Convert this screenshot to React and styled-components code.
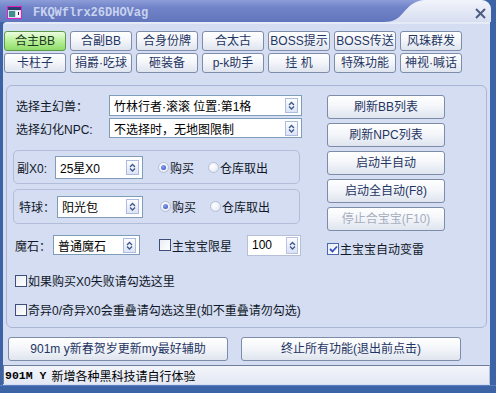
import React from "react";
import styled, { createGlobalStyle, css } from "styled-components";

const GlobalStyle = createGlobalStyle`
  html, body {
    margin: 0;
    padding: 0;
    background: #3b63a6;
  }
  body {
    font-family: "Liberation Sans", "Noto Sans CJK SC", sans-serif;
  }
`;

const CJK = `"Liberation Sans", "Noto Sans CJK SC", sans-serif`;

const Window = styled.div`
  width: 496px;
  height: 393px;
  display: flex;
  flex-direction: column;
  background: #3b63a6;
  overflow: hidden;
  font-family: ${CJK};
  font-size: 12px;
`;

const TitleBar = styled.div`
  position: relative;
  flex: none;
  height: 22px;
  margin-right: 5px;
  border-top-right-radius: 9px;
  background: linear-gradient(#f2f4fb, #d7def1);
  display: flex;
  align-items: center;
  padding: 3px 0 0 7px;
  box-sizing: border-box;

  &::before {
    content: "";
    position: absolute;
    inset: 0;
    background: linear-gradient(#8d9dd8, #7083c8 35%, #6276bd);
    clip-path: path("M0 0 H424 C414 1 409 6 403 13 C398 19 393 22 384 22 H0 Z");
  }
`;

const TitleIcon = styled.svg`
  position: relative;
  flex: none;
`;

const TitleText = styled.span`
  position: relative;
  margin-left: 11px;
  font-family: "Liberation Mono", monospace;
  font-weight: bold;
  font-size: 12px;
  color: #c9d3ef;
`;

const CloseIcon = styled.svg`
  position: relative;
  margin-left: auto;
  margin-right: 5px;
  margin-top: 2px;
`;

const Body = styled.div`
  flex: 1;
  display: flex;
  flex-direction: column;
  margin: 0 6px 0 3px;
  background: #d5ddf2;
  border-top: 2px solid #e6ebf8;
  border-top-left-radius: 4px;
  box-sizing: border-box;
`;

const Content = styled.div`
  flex: 1;
  display: flex;
  flex-direction: column;
  padding: 7px 0 0 1px;
`;

const ButtonGrid = styled.div`
  display: grid;
  grid-template-columns: repeat(7, 62px);
  grid-auto-rows: 20px;
  gap: 2px 4px;
`;

const Btn = styled.button`
  box-sizing: border-box;
  height: ${(p) => p.$h || 20}px;
  width: ${(p) => (p.$w ? `${p.$w}px` : "auto")};
  margin: 0;
  padding: 0;
  font-family: ${CJK};
  font-size: 12px;
  line-height: 1;
  color: ${(p) => (p.$off ? "#a6aebe" : "#1f3563")};
  border: 1px solid #7d8ca8;
  border-radius: 3px;
  background: linear-gradient(#ffffff, #f4f6fa 45%, #dfe4ee);
  white-space: nowrap;
  ${(p) =>
    p.$active &&
    css`
      border-color: #5f9a4c;
      background: linear-gradient(#ecfde0, #bdf19f 45%, #8edc68);
      color: #1d3a20;
    `}
`;

const MainPanel = styled.div`
  box-sizing: border-box;
  margin: 12px 0 0 2px;
  width: 481px;
  height: 243px;
  border: 1px solid #aab6d6;
  border-radius: 6px;
  display: grid;
  grid-template-columns: 289px 118px;
  column-gap: 25px;
  padding: 9px 0 0 6px;
`;

const LeftCol = styled.div`
  display: flex;
  flex-direction: column;
`;

const RightCol = styled.div`
  display: flex;
  flex-direction: column;
  gap: 4px;
`;

const Row = styled.div`
  display: flex;
  align-items: center;
  height: ${(p) => p.$h || 21}px;
  margin-top: ${(p) => p.$mt || 0}px;
  padding-left: ${(p) => p.$pl || 0}px;
`;

const Label = styled.span`
  width: ${(p) => (p.$w ? `${p.$w}px` : "auto")};
  flex: none;
  color: #101828;
  font-size: 12px;
  white-space: nowrap;
  margin-left: ${(p) => p.$ml || 0}px;
`;

const Group = styled.div`
  box-sizing: border-box;
  width: 287px;
  height: ${(p) => p.$h}px;
  margin-top: ${(p) => p.$mt}px;
  border: 1px solid #b2bdd9;
  border-radius: 5px;
  display: flex;
  align-items: center;
  padding-left: 3px;
`;

const ComboBox = styled.div`
  box-sizing: border-box;
  flex: none;
  width: ${(p) => p.$w}px;
  height: ${(p) => p.$h}px;
  border: 1px solid #7f9db9;
  background: #fff;
  display: flex;
  align-items: center;
  padding: 0 3px 0 4px;
`;

const ComboText = styled.span`
  flex: 1;
  font-size: 12px;
  color: #000;
  white-space: nowrap;
  overflow: hidden;
`;

const DropBtn = styled.span`
  box-sizing: border-box;
  flex: none;
  width: 13px;
  height: 15px;
  border: 1px solid #aebbe0;
  background: linear-gradient(#fcfdff, #dce4f6);
  display: flex;
  align-items: center;
  justify-content: center;
`;

const RadioGroup = styled.div`
  display: flex;
  align-items: center;
  margin-left: ${(p) => p.$ml}px;
  gap: 14px;
`;

const Option = styled.label`
  display: flex;
  align-items: center;
  gap: 1px;
  color: #101828;
  font-size: 12px;
`;

const RadioDot = styled.span`
  position: relative;
  box-sizing: border-box;
  width: 11px;
  height: 11px;
  border-radius: 50%;
  border: 1px solid #b4bfd8;
  background: radial-gradient(circle at 40% 35%, #ffffff, #dfe5f1);
  ${(p) =>
    p.$on &&
    css`
      &::after {
        content: "";
        position: absolute;
        left: 2px;
        top: 2px;
        width: 5px;
        height: 5px;
        border-radius: 50%;
        background: radial-gradient(circle at 40% 35%, #8ea2f0, #2f48c0);
      }
    `}
`;

const CheckBox = styled.span`
  box-sizing: border-box;
  flex: none;
  width: 12px;
  height: 12px;
  border: 1px solid ${(p) => (p.$on ? "#4d6aa8" : "#3d4f78")};
  background: linear-gradient(135deg, #e8ecf4, #ffffff);
  display: flex;
  align-items: center;
  justify-content: center;
`;

const CheckItem = styled.label`
  display: flex;
  align-items: center;
  gap: 1px;
  color: #101828;
  font-size: 12px;
  white-space: nowrap;
  margin-left: ${(p) => p.$ml || 0}px;
  margin-top: ${(p) => p.$mt || 0}px;
`;

const SpinBox = styled.div`
  box-sizing: border-box;
  flex: none;
  width: 54px;
  height: 21px;
  margin-left: 15px;
  border: 1px solid #b5bfd6;
  background: #fff;
  display: flex;
  align-items: center;
  padding: 0 2px 0 4px;
  font-size: 12px;
  color: #000;
`;

const SpinBtn = styled.span`
  box-sizing: border-box;
  margin-left: auto;
  width: 12px;
  height: 17px;
  border: 1px solid #b8c3e2;
  background: linear-gradient(#fcfdff, #d9e1f5);
  display: flex;
  align-items: center;
  justify-content: center;
`;

const BottomRow = styled.div`
  display: flex;
  gap: 13px;
  margin: 9px 0 0 4px;
`;

const StatusBar = styled.div`
  box-sizing: border-box;
  height: 19px;
  margin-bottom: 1px;
  display: flex;
  align-items: center;
  padding-left: 1px;
  border-top: 1px solid #6f7d9d;
  border-left: 1px solid #6f7d9d;
  border-right: 1px solid #b7c1da;
  background: linear-gradient(#f3f5fb, #e3e8f4);
  color: #000;
  font-size: 12px;
  white-space: nowrap;
`;

const Mono = styled.span`
  font-family: "Liberation Mono", monospace;
  font-weight: bold;
  font-size: 11.5px;
  margin-right: 5px;
`;

const BottomFrame = styled.div`
  flex: none;
  height: 7px;
  border-top: 1px solid #5a7fc0;
`;

const Arrows = () => (
  <svg width="7" height="9" viewBox="0 0 7 9">
    <path d="M1 4 L3.5 1.5 L6 4 M1 5.5 L3.5 8 L6 5.5" fill="none" stroke="#3e5789" strokeWidth="1.3" />
  </svg>
);

const Combo = ({ w, h, children }) => (
  <ComboBox $w={w} $h={h}>
    <ComboText>{children}</ComboText>
    <DropBtn>
      <Arrows />
    </DropBtn>
  </ComboBox>
);

const Check = ({ on, children, ml, mt }) => (
  <CheckItem $ml={ml} $mt={mt}>
    <CheckBox $on={on}>
      {on && (
        <svg width="9" height="8" viewBox="0 0 9 8">
          <path d="M1 4 L3.5 6.5 L8 1.5" fill="none" stroke="#3450c4" strokeWidth="1.8" />
        </svg>
      )}
    </CheckBox>
    {children}
  </CheckItem>
);

const Radios = ({ ml }) => (
  <RadioGroup $ml={ml}>
    <Option>
      <RadioDot $on />
      购买
    </Option>
    <Option>
      <RadioDot />
      仓库取出
    </Option>
  </RadioGroup>
);

const topButtons = [
  "合主BB", "合副BB", "合身份牌", "合太古", "BOSS提示", "BOSS传送", "风珠群发",
  "卡柱子", "捐爵·吃球", "砸装备", "p-k助手", "挂 机", "特殊功能", "神视·喊话",
];

const sideButtons = [
  { text: "刷新BB列表" },
  { text: "刷新NPC列表" },
  { text: "启动半自动" },
  { text: "启动全自动(F8)" },
  { text: "停止合宝宝(F10)", off: true },
];

export default function App() {
  return (
    <Window>
      <GlobalStyle />
      <TitleBar>
        <TitleIcon width="15" height="13" viewBox="0 0 15 13">
          <rect x="0.5" y="0.5" width="14" height="12" fill="#d8dce8" stroke="#e020c8" />
          <rect x="1" y="1" width="13" height="3" fill="#28406a" />
          <rect x="2" y="5" width="6" height="6" fill="#3f8f8a" />
          <rect x="9" y="5" width="4" height="6" fill="#f4f6fa" />
          <rect x="11" y="6" width="1" height="3" fill="#202020" />
        </TitleIcon>
        <TitleText>FKQWflrx26DHOVag</TitleText>
        <CloseIcon width="11" height="11" viewBox="0 0 11 11">
          <path d="M1 1 L10 10 M10 1 L1 10" stroke="#4c5c82" strokeWidth="2" />
        </CloseIcon>
      </TitleBar>
      <Body>
        <Content>
          <ButtonGrid>
            {topButtons.map((t, i) => (
              <Btn key={t} $active={i === 0}>
                {t}
              </Btn>
            ))}
          </ButtonGrid>
          <MainPanel>
            <LeftCol>
              <Row $h={21} $pl={3}>
                <Label $w={93}>选择主幻兽：</Label>
                <Combo w={193} h={21}>竹林行者·滚滚 位置:第1格</Combo>
              </Row>
              <Row $h={20} $mt={2} $pl={3}>
                <Label $w={93}>选择幻化NPC:</Label>
                <Combo w={193} h={20}>不选择时，无地图限制</Combo>
              </Row>
              <Group $h={34} $mt={12}>
                <Label $w={38}>副X0:</Label>
                <Combo w={88} h={23}>25星X0</Combo>
                <Radios ml={15} />
              </Group>
              <Group $h={35} $mt={5}>
                <Label $w={38} $ml={2}>特球：</Label>
                <Combo w={86} h={22}>阳光包</Combo>
                <Radios ml={17} />
              </Group>
              <Row $h={22} $mt={10} $pl={2}>
                <Label $w={38}>魔石：</Label>
                <Combo w={87} h={20}>普通魔石</Combo>
                <Check ml={19}>主宝宝限星</Check>
                <SpinBox>
                  100
                  <SpinBtn>
                    <Arrows />
                  </SpinBtn>
                </SpinBox>
              </Row>
              <Check ml={2} mt={16}>如果购买X0失败请勾选这里</Check>
              <Check ml={2} mt={12}>奇异0/奇异X0会重叠请勾选这里(如不重叠请勿勾选)</Check>
            </LeftCol>
            <RightCol>
              {sideButtons.map((b) => (
                <Btn key={b.text} $h={24} $off={b.off}>
                  {b.text}
                </Btn>
              ))}
              <Check on mt={5}>主宝宝自动变雷</Check>
            </RightCol>
          </MainPanel>
          <BottomRow>
            <Btn $h={24} $w={220}>901m y新春贺岁更新my最好辅助</Btn>
            <Btn $h={24} $w={220}>终止所有功能(退出前点击)</Btn>
          </BottomRow>
        </Content>
        <StatusBar>
          <Mono>901M Y</Mono>
          新增各种黑科技请自行体验
        </StatusBar>
      </Body>
      <BottomFrame />
    </Window>
  );
}
